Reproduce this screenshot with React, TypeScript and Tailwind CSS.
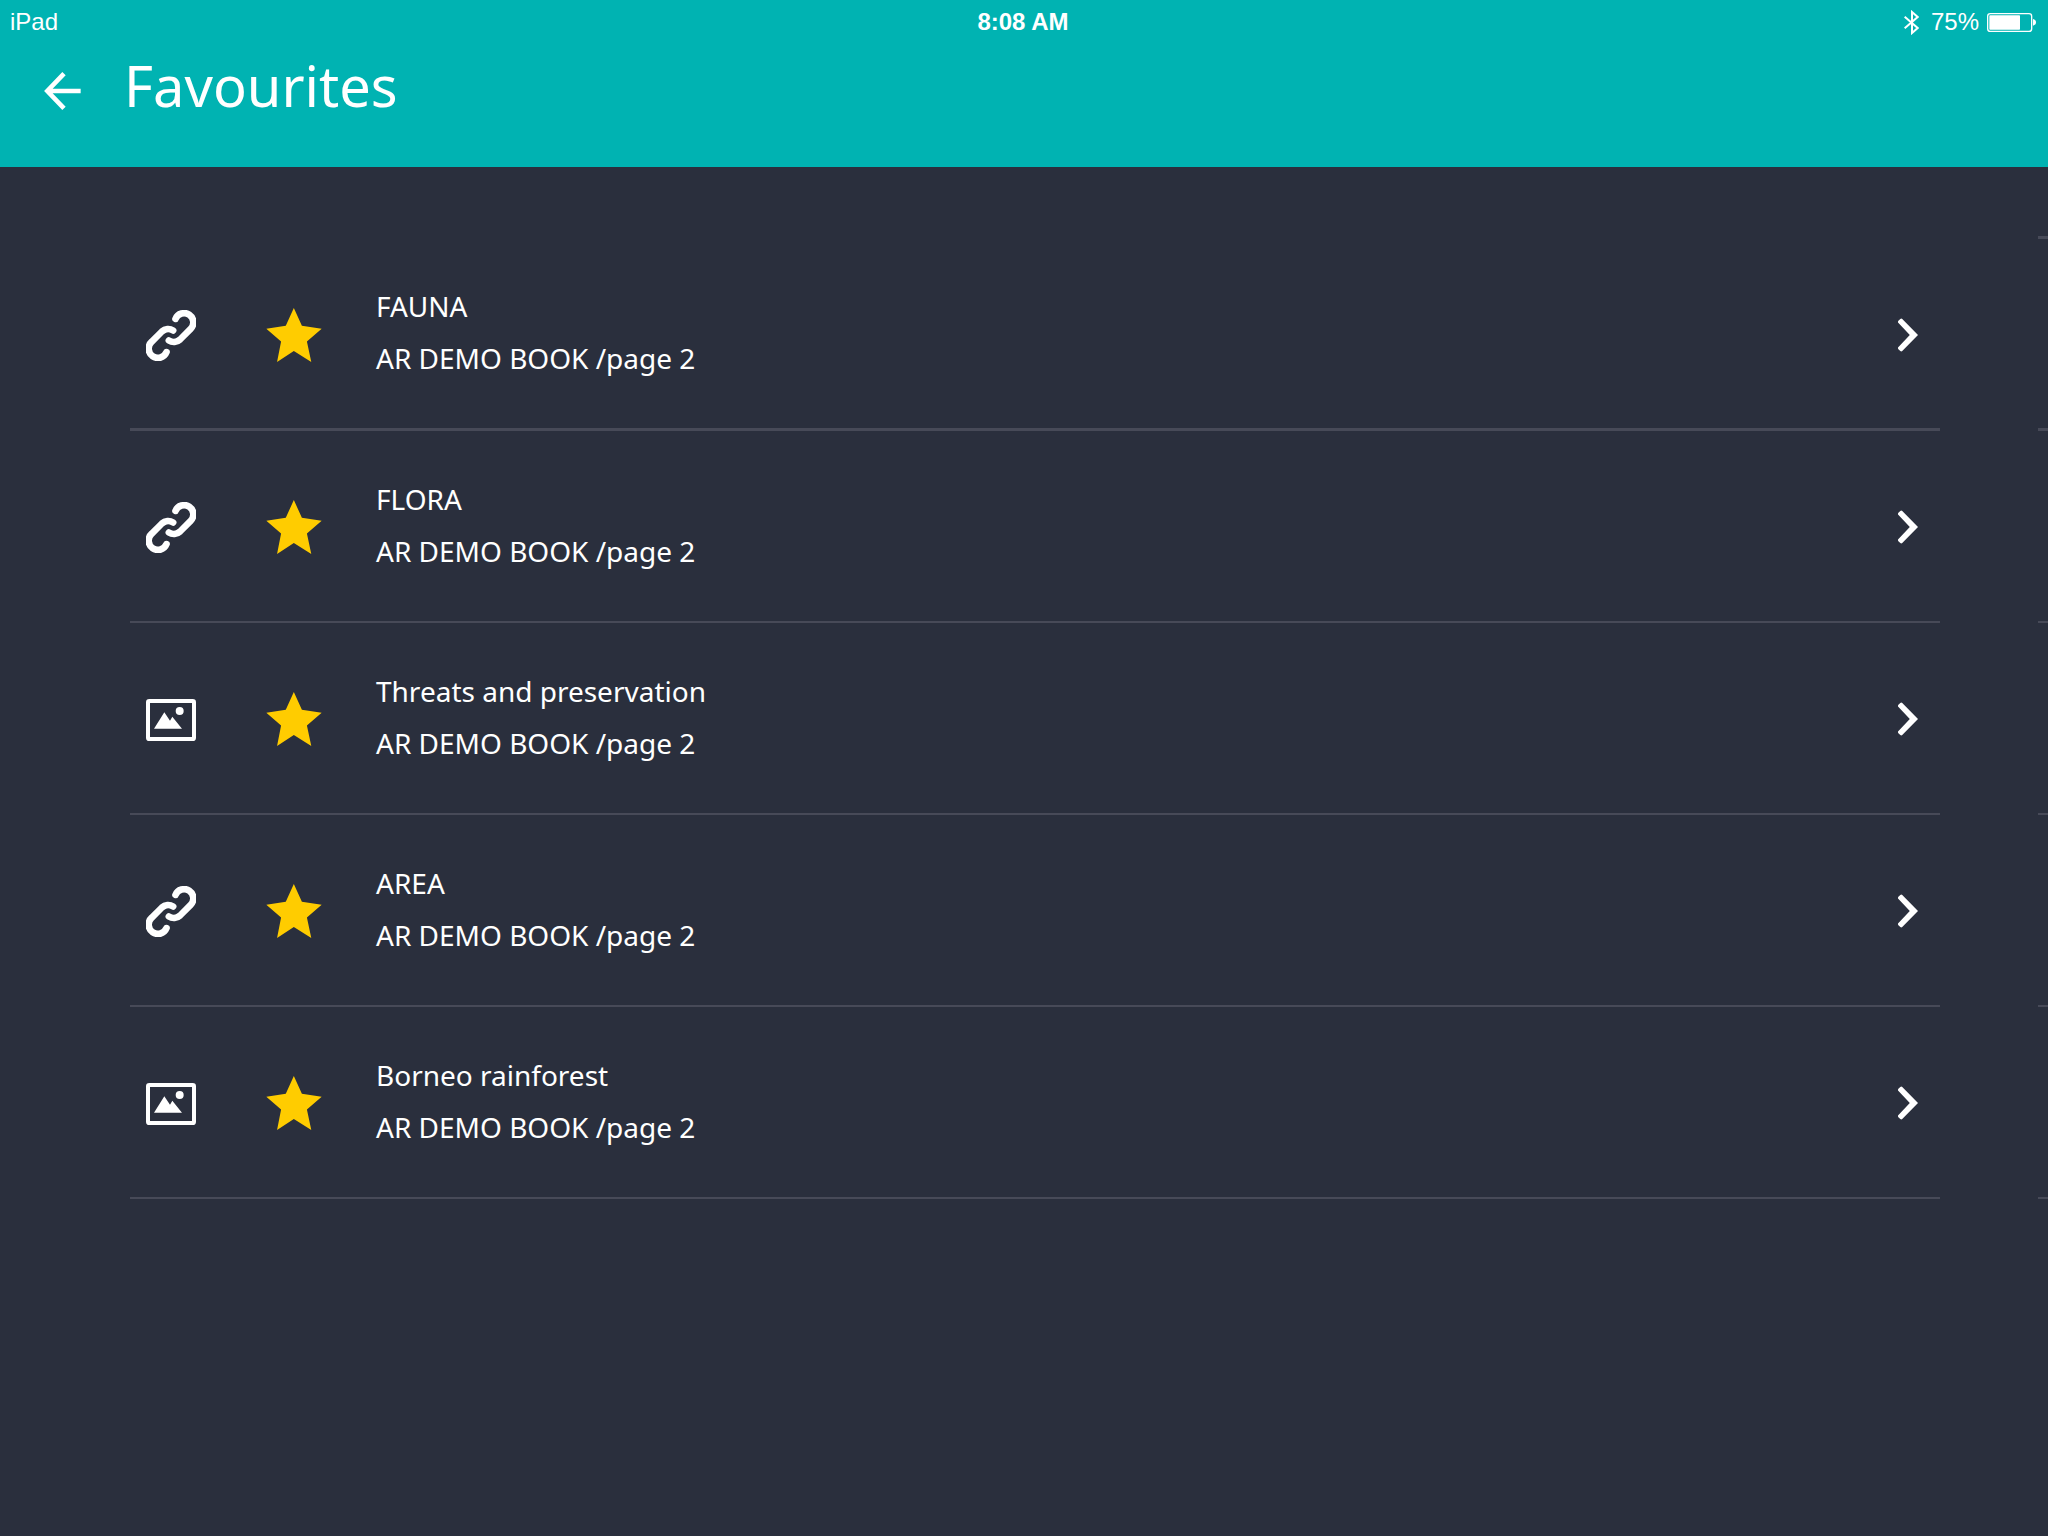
import React from "react";

type Favourite = {
  title: string;
  source: string;
  kind: "link" | "image";
};

const favourites: Favourite[] = [
  { title: "FAUNA", source: "AR DEMO BOOK /page 2", kind: "link" },
  { title: "FLORA", source: "AR DEMO BOOK /page 2", kind: "link" },
  { title: "Threats and preservation", source: "AR DEMO BOOK /page 2", kind: "image" },
  { title: "AREA", source: "AR DEMO BOOK /page 2", kind: "link" },
  { title: "Borneo rainforest", source: "AR DEMO BOOK /page 2", kind: "image" },
];

const LinkIcon = () => (
  <svg viewBox="0 0 151 152" className="w-[50px] h-[51px]" fill="none" stroke="#fff" strokeWidth="20" strokeLinecap="round" aria-hidden="true">
    <path d="M89 26A28 28 0 1 1 134 57L103 88A28 28 0 0 1 69 91" />
    <path d="M62 126A28 28 0 1 1 17 95L48 64A28 28 0 0 1 82 61" />
  </svg>
);

const ImageIcon = () => (
  <svg viewBox="0 0 150 126" className="w-[50px] h-[42px]" fill="#fff" aria-hidden="true">
    <rect x="6" y="6" width="138" height="114" rx="4" fill="none" stroke="#fff" strokeWidth="12" />
    <path d="M24 89L55 40L72 65L79 53L108 89Z" />
    <circle cx="101" cy="36" r="12" />
  </svg>
);

const StarIcon = () => (
  <svg viewBox="0 0 165 161" className="w-[56px] h-[54px]" fill="#ffcc00" aria-hidden="true">
    <path d="M82 0L106 53L165 62L121 100L134 161L82 128L32 161L44 100L0 62L58 53Z" />
  </svg>
);

const ChevronIcon = () => (
  <svg viewBox="0 0 61 102" className="w-5 h-[34px]" fill="#fff" aria-hidden="true">
    <path d="M0 13Q-1 10 2 7L7 2Q10 -1 13 2L61 51L13 100Q10 103 7 100L2 95Q-1 92 0 89L36 51Z" />
  </svg>
);

const BackIcon = () => (
  <svg viewBox="0 0 111 114" className="w-[37px] h-[38px]" fill="none" stroke="#fff" strokeWidth="14" aria-hidden="true">
    <path d="M60 5L10 57L60 109M12 57H110" />
  </svg>
);

const BluetoothIcon = () => (
  <svg viewBox="0 0 45 75" className="w-[15px] h-[25px]" fill="none" stroke="#fff" strokeWidth="6" aria-hidden="true">
    <path d="M2 20L41 54L24 69V6L41 21L2 55" />
  </svg>
);

const BatteryIcon = () => (
  <svg viewBox="0 0 147 57" className="w-[49px] h-[19px]" fill="#fff" aria-hidden="true">
    <rect x="2" y="2" width="132" height="53" rx="8" fill="none" stroke="#fff" strokeWidth="4" />
    <rect x="7" y="7" width="92" height="43" rx="2" />
    <path d="M138 18Q147 20 147 28Q147 36 138 38Z" />
  </svg>
);

const StatusBar = () => (
  <div className="grid grid-cols-3 items-center h-11 pl-[10px] pr-3 font-['Liberation_Sans',Arial,sans-serif] text-2xl leading-[44px]">
    <span>iPad</span>
    <span className="text-center font-bold">8:08 AM</span>
    <div className="flex items-center justify-end">
      <BluetoothIcon />
      <span className="ml-3 mr-2">75%</span>
      <BatteryIcon />
    </div>
  </div>
);

const FavouriteRow = ({ item, first }: { item: Favourite; first: boolean }) => {
  return (
    <li
      className={
        first
          ? "flex items-center h-48 border-b-3 border-[#474a58]"
          : "flex items-center h-48 border-b-2 border-[#474a58]"
      }
    >
      <div className="flex w-[136px] pl-4 pt-[3px]">
        {item.kind === "link" ? <LinkIcon /> : <ImageIcon />}
      </div>
      <button type="button" aria-label={`Remove ${item.title} from favourites`} className="pt-[2px]">
        <StarIcon />
      </button>
      <a href="#" className="flex flex-1 items-center justify-between pl-[54px] pr-[22px]">
        <span className="flex flex-col pb-[3px] text-[28px] leading-[52px]">
          <span>{item.title}</span>
          <span>{item.source}</span>
        </span>
        <span className="pt-[2px]">
          <ChevronIcon />
        </span>
      </a>
    </li>
  );
};

export default function App() {
  return (
    <div className="min-h-screen overflow-x-hidden bg-[#2a2f3d] text-white font-['Noto_Sans',sans-serif]">
      <header className="h-[167px] bg-[#00b3b2]">
        <StatusBar />
        <div className="flex items-center pl-11">
          <button type="button" aria-label="Back" className="pt-3">
            <BackIcon />
          </button>
          <h1 className="pl-[43px] text-[56px] leading-[82px]">Favourites</h1>
        </div>
      </header>
      <main className="flex pt-[69px] pl-[130px]">
        <ul className="flex-1 border-t-3 border-transparent">
          {favourites.map((item, i) => (
            <FavouriteRow key={item.title} item={item} first={i === 0} />
          ))}
        </ul>
        {/* edge of the next page */}
        <div className="ml-[98px] w-[10px] border-t-3 border-[#474a58]" aria-hidden="true">
          {favourites.map((item, i) => (
            <div
              key={item.title}
              className={i === 0 ? "h-48 border-b-3 border-[#474a58]" : "h-48 border-b-2 border-[#474a58]"}
            />
          ))}
        </div>
      </main>
    </div>
  );
}
